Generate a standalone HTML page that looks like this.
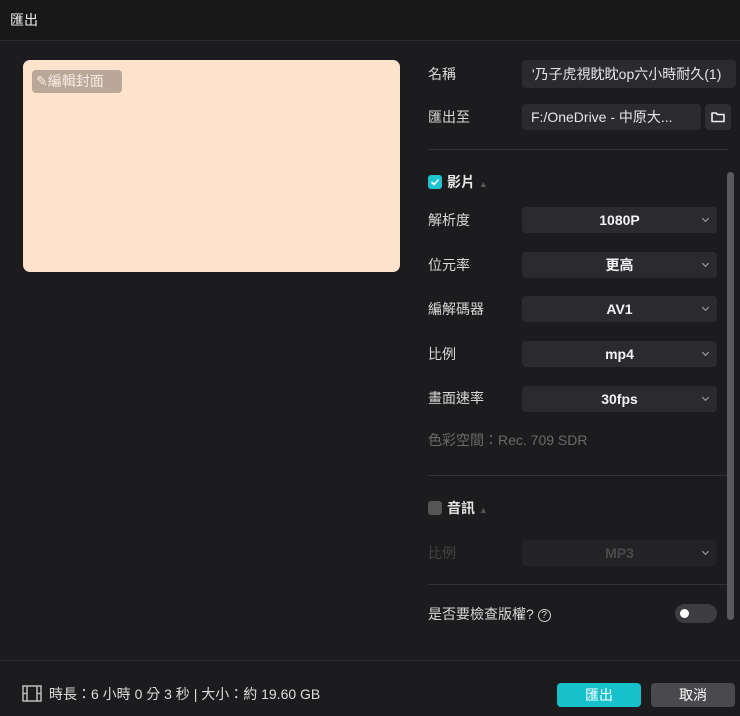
<!DOCTYPE html>
<html><head><meta charset="utf-8"><style>
*{margin:0;padding:0;box-sizing:border-box}
body{width:740px;height:716px;background:#1c1c1e;font-family:"Liberation Sans","Noto Sans CJK TC",sans-serif;color:#e6e6e6;position:relative;overflow:hidden;font-size:14px}
.a{position:absolute}
.lbl{position:absolute;left:428px;font-size:14px;color:#d8d8d8;line-height:16px}
.sel{position:absolute;left:522px;width:195px;height:26px;background:#2b2b2f;border-radius:4px;text-align:center;line-height:26px;font-weight:bold;font-size:14px;color:#f2f2f2}
.sel:after{content:"";position:absolute;right:9px;top:9px;width:4px;height:4px;border-right:1.5px solid #aaa;border-bottom:1.5px solid #aaa;transform:rotate(45deg)}
.line{position:absolute;left:428px;width:300px;height:1px;background:#333}
</style></head><body>
<div class="a" style="left:0;top:0;width:740px;height:41px;background:#181818;border-bottom:1px solid #2a2a2a"></div>
<div class="a" style="left:10px;top:12px;font-size:14px;line-height:16px;color:#eee">匯出</div>
<div class="a" style="left:23px;top:60px;width:377px;height:212px;background:#fde2cc;border-radius:7px"></div>
<div class="a" style="left:32px;top:70px;width:90px;height:23px;background:#b9a797;border-radius:4px;color:#f4ebe4;font-size:14px;line-height:23px;padding-left:4px">✎編輯封面</div>
<div class="lbl" style="top:66px">名稱</div>
<div class="a" style="left:522px;top:60px;width:214px;height:28px;background:#2b2b2f;border-radius:4px;line-height:28px;padding-left:10px;font-size:14px;overflow:hidden;white-space:nowrap">'乃子虎視眈眈op六小時耐久(1)</div>
<div class="lbl" style="top:109px">匯出至</div>
<div class="a" style="left:522px;top:104px;width:179px;height:26px;background:#2b2b2f;border-radius:4px;line-height:26px;padding-left:9px;font-size:14px">F:/OneDrive - 中原大...</div>
<div class="a" style="left:705px;top:104px;width:26px;height:26px;background:#2f2f33;border-radius:4px">
<svg width="26" height="26"><path d="M7 9h4l1.5 1.5H19v7H7z" fill="none" stroke="#eee" stroke-width="1.6" stroke-linejoin="round"/></svg></div>
<div class="line" style="top:149px"></div>
<div class="a" style="left:428px;top:175px;width:14px;height:14px;background:#1ec4d0;border-radius:3px"><svg width="14" height="14"><path d="M3.5 7l2.5 2.5 4.5-5" stroke="#fff" stroke-width="1.6" fill="none"/></svg></div>
<div class="a" style="left:447px;top:174px;font-weight:bold;font-size:14px;line-height:16px">影片 <span style="color:#555;font-size:9px">▲</span></div>
<div class="lbl" style="top:212px">解析度</div><div class="sel" style="top:207px">1080P</div>
<div class="lbl" style="top:257px">位元率</div><div class="sel" style="top:252px">更高</div>
<div class="lbl" style="top:301px">編解碼器</div><div class="sel" style="top:296px">AV1</div>
<div class="lbl" style="top:346px">比例</div><div class="sel" style="top:341px">mp4</div>
<div class="lbl" style="top:390px">畫面速率</div><div class="sel" style="top:386px">30fps</div>
<div class="lbl" style="top:432px;color:#6a6a6a">色彩空間：Rec. 709 SDR</div>
<div class="line" style="top:475px"></div>
<div class="a" style="left:428px;top:501px;width:14px;height:14px;background:#555;border-radius:3px"></div>
<div class="a" style="left:447px;top:500px;font-weight:bold;font-size:14px;line-height:16px">音訊 <span style="color:#555;font-size:9px">▲</span></div>
<div class="lbl" style="top:545px;color:#444">比例</div>
<div class="sel" style="top:540px;background:#232326;color:#4a4a4a">MP3</div>
<div class="line" style="top:584px"></div>
<div class="lbl" style="top:606px">是否要檢查版權? <span style="font-size:10px;border:1px solid #ccc;border-radius:50%;display:inline-block;width:13px;height:13px;line-height:11px;text-align:center;vertical-align:1px">?</span></div>
<div class="a" style="left:675px;top:604px;width:42px;height:19px;background:#3e3e42;border-radius:10px"><div class="a" style="left:5px;top:5px;width:9px;height:9px;background:#fff;border-radius:50%"></div></div>
<div class="a" style="left:727px;top:172px;width:7px;height:448px;background:#5a5a5e;border-radius:4px"></div>
<div class="a" style="left:0;top:660px;width:740px;height:1px;background:#2c2c2c"></div>
<svg class="a" style="left:22px;top:685px" width="20" height="17"><rect x="1" y="1" width="18" height="15" fill="none" stroke="#bbb" stroke-width="1.5"/><path d="M5 1v15M15 1v15M1 8.5h4M15 8.5h4" stroke="#bbb" stroke-width="1.5"/></svg>
<div class="a" style="left:49px;top:686px;font-size:14px;line-height:16px;color:#ddd">時長：6 小時 0 分 3 秒 | 大小：約 19.60 GB</div>
<div class="a" style="left:557px;top:683px;width:84px;height:24px;background:#17c1cc;border-radius:4px;text-align:center;line-height:24px;color:#fff;font-size:14px">匯出</div>
<div class="a" style="left:651px;top:683px;width:84px;height:24px;background:#4a4a4e;border-radius:4px;text-align:center;line-height:24px;color:#fff;font-size:14px">取消</div>
</body></html>
